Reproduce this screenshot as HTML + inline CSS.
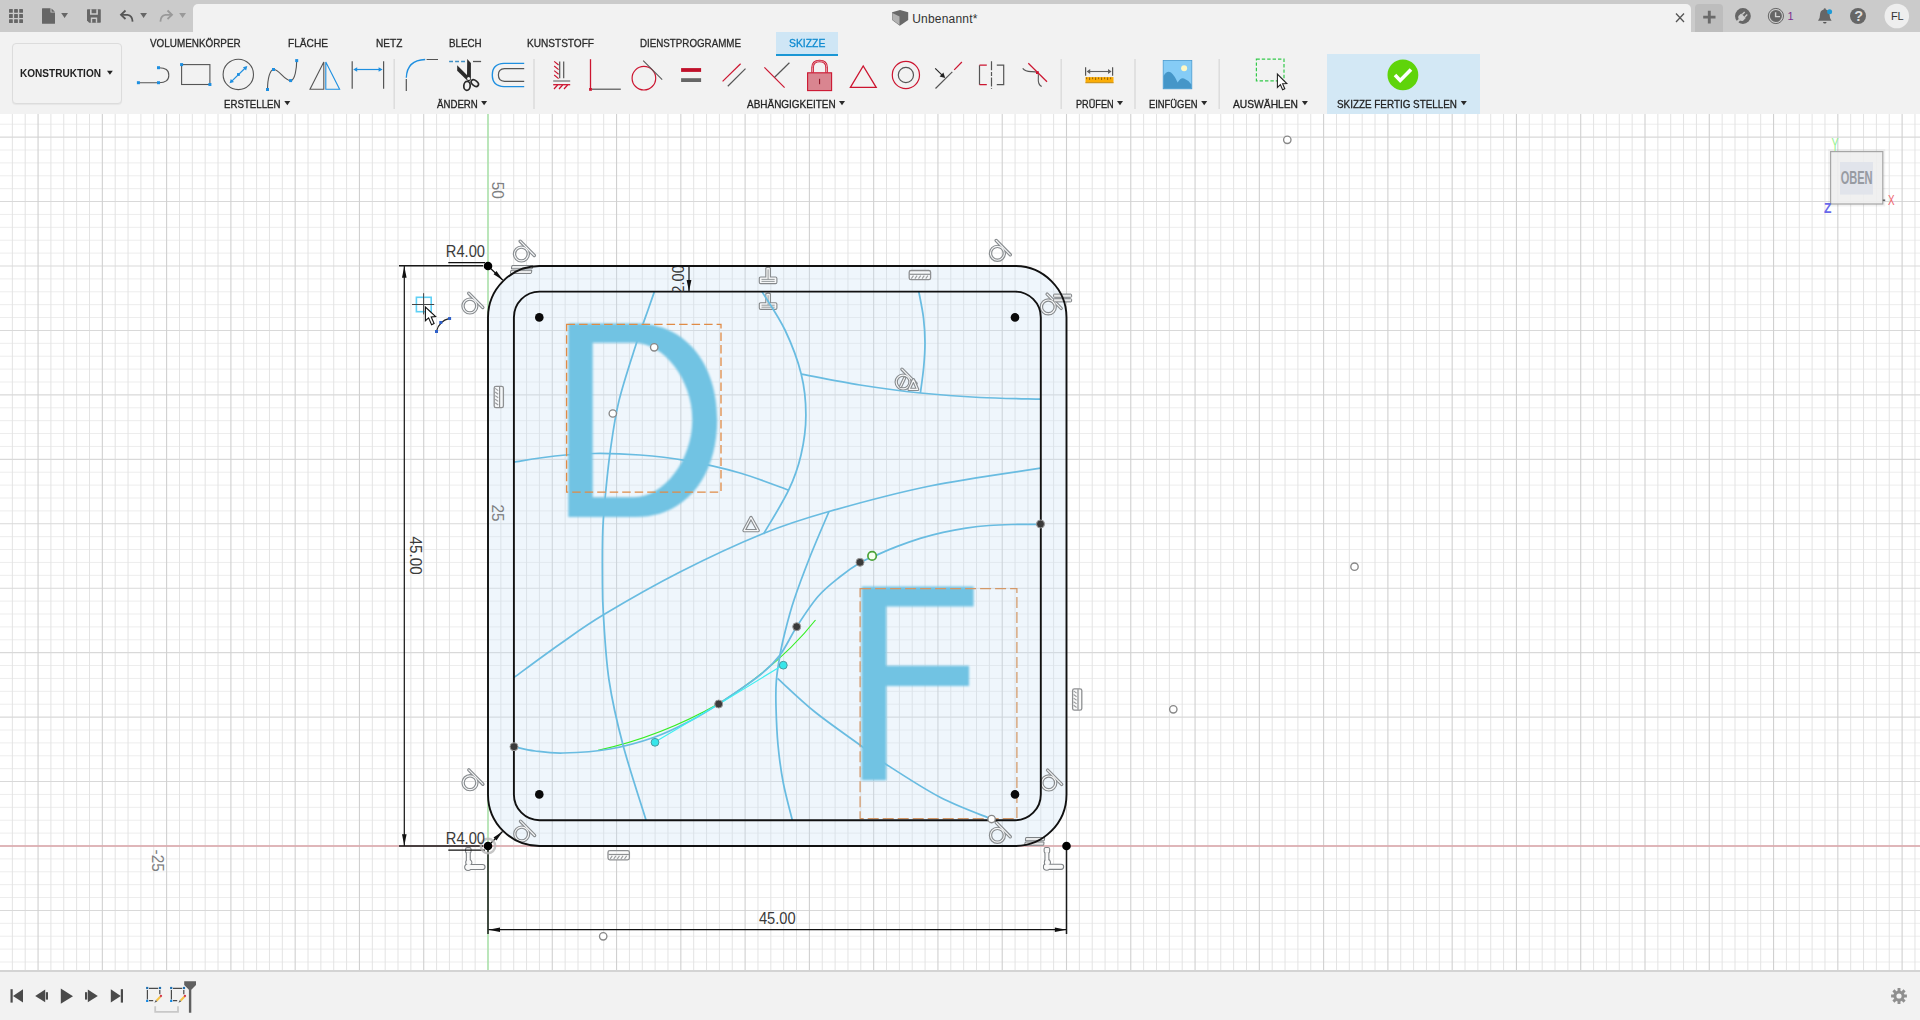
<!DOCTYPE html>
<html><head><meta charset="utf-8"><title>Fusion</title>
<style>
*{margin:0;padding:0;box-sizing:border-box}
html,body{width:1920px;height:1020px;overflow:hidden;background:#fff;font-family:"Liberation Sans",sans-serif;}
.t{position:absolute;white-space:nowrap;font-family:"Liberation Sans",sans-serif;}
#topbar{position:absolute;left:0;top:0;width:1920px;height:32px;background:#cbcbcb;}
#tab{position:absolute;left:193px;top:4px;width:1498px;height:28px;background:#f2f2f2;border-radius:5px 5px 0 0;}
#plus{position:absolute;left:1695px;top:4px;width:28px;height:28px;background:#bdbdbd;border-radius:4px 4px 0 0;}
#toolbar{position:absolute;left:0;top:32px;width:1920px;height:82px;background:#f2f2f2;}
#canvas{position:absolute;left:0;top:0;width:1920px;height:1020px;}
#bottom{position:absolute;left:0;top:970px;width:1920px;height:50px;background:#f2f2f2;border-top:2px solid #d4d4d4;}
svg{position:absolute;left:0;top:0;overflow:visible}

</style></head><body>
<div id="canvas"><svg width="1920" height="1020" viewBox="0 0 1920 1020">
<defs>
<filter id="blur1" x="-5%" y="-5%" width="110%" height="110%"><feGaussianBlur stdDeviation="1.3"/></filter>
<clipPath id="cvclip"><rect x="0" y="113.5" width="1920" height="856.5"/></clipPath>
<clipPath id="dimclip"><rect x="660" y="267" width="40" height="24.5"/></clipPath>
<g id="tan"><circle r="7"/><path d="M-1.2 -12.6 L12.9 1.5"/></g>
<g id="hor"><rect x="-10.7" y="-4.5" width="21.4" height="9" rx="1.5"/><path d="M-10.7 -0.4 H10.7"/></g>
<g id="perp"><path d="M-8 6 H8 M-8 3 H8 M0 3 V-7"/></g>
</defs>
<g clip-path="url(#cvclip)"><path d="M0 962.00H1920M0 949.11H1920M0 936.22H1920M0 923.33H1920M0 897.56H1920M0 884.67H1920M0 871.78H1920M0 858.89H1920M0 833.11H1920M0 820.22H1920M0 807.33H1920M0 794.44H1920M0 768.67H1920M0 755.78H1920M0 742.89H1920M0 730.00H1920M0 704.22H1920M0 691.33H1920M0 678.44H1920M0 665.56H1920M0 639.78H1920M0 626.89H1920M0 614.00H1920M0 601.11H1920M0 575.33H1920M0 562.44H1920M0 549.56H1920M0 536.67H1920M0 510.89H1920M0 498.00H1920M0 485.11H1920M0 472.22H1920M0 446.44H1920M0 433.56H1920M0 420.67H1920M0 407.78H1920M0 382.00H1920M0 369.11H1920M0 356.22H1920M0 343.33H1920M0 317.56H1920M0 304.67H1920M0 291.78H1920M0 278.89H1920M0 253.11H1920M0 240.22H1920M0 227.33H1920M0 214.44H1920M0 188.67H1920M0 175.78H1920M0 162.89H1920M0 150.00H1920M0 124.22H1920M0 111.33H1920" stroke="#ededed" stroke-width="1" fill="none"/><path d="M-0.51 113V970M12.34 113V970M25.20 113V970M50.91 113V970M63.77 113V970M76.62 113V970M89.48 113V970M115.19 113V970M128.04 113V970M140.90 113V970M153.76 113V970M179.47 113V970M192.32 113V970M205.18 113V970M218.03 113V970M243.74 113V970M256.60 113V970M269.46 113V970M282.31 113V970M308.02 113V970M320.88 113V970M333.73 113V970M346.59 113V970M372.30 113V970M385.16 113V970M398.01 113V970M410.87 113V970M436.58 113V970M449.43 113V970M462.29 113V970M475.14 113V970M500.86 113V970M513.71 113V970M526.57 113V970M539.42 113V970M565.13 113V970M577.99 113V970M590.84 113V970M603.70 113V970M629.41 113V970M642.27 113V970M655.12 113V970M667.98 113V970M693.69 113V970M706.54 113V970M719.40 113V970M732.26 113V970M757.97 113V970M770.82 113V970M783.68 113V970M796.53 113V970M822.24 113V970M835.10 113V970M847.96 113V970M860.81 113V970M886.52 113V970M899.38 113V970M912.23 113V970M925.09 113V970M950.80 113V970M963.66 113V970M976.51 113V970M989.37 113V970M1015.08 113V970M1027.93 113V970M1040.79 113V970M1053.64 113V970M1079.36 113V970M1092.21 113V970M1105.07 113V970M1117.92 113V970M1143.63 113V970M1156.49 113V970M1169.34 113V970M1182.20 113V970M1207.91 113V970M1220.77 113V970M1233.62 113V970M1246.48 113V970M1272.19 113V970M1285.04 113V970M1297.90 113V970M1310.76 113V970M1336.47 113V970M1349.32 113V970M1362.18 113V970M1375.03 113V970M1400.74 113V970M1413.60 113V970M1426.46 113V970M1439.31 113V970M1465.02 113V970M1477.88 113V970M1490.73 113V970M1503.59 113V970M1529.30 113V970M1542.16 113V970M1555.01 113V970M1567.87 113V970M1593.58 113V970M1606.43 113V970M1619.29 113V970M1632.14 113V970M1657.86 113V970M1670.71 113V970M1683.57 113V970M1696.42 113V970M1722.13 113V970M1734.99 113V970M1747.84 113V970M1760.70 113V970M1786.41 113V970M1799.27 113V970M1812.12 113V970M1824.98 113V970M1850.69 113V970M1863.54 113V970M1876.40 113V970M1889.26 113V970M1914.97 113V970" stroke="#e3e3e3" stroke-width="1" fill="none"/><path d="M0 910.44H1920M0 846.00H1920M0 781.56H1920M0 717.11H1920M0 652.67H1920M0 588.22H1920M0 523.78H1920M0 459.33H1920M0 394.89H1920M0 330.44H1920M0 266.00H1920M0 201.56H1920M0 137.11H1920" stroke="#d9d9d9" stroke-width="1.1" fill="none"/><path d="M38.06 113V970M102.33 113V970M166.61 113V970M230.89 113V970M295.17 113V970M359.44 113V970M423.72 113V970M488.00 113V970M552.28 113V970M616.56 113V970M680.83 113V970M745.11 113V970M809.39 113V970M873.67 113V970M937.94 113V970M1002.22 113V970M1066.50 113V970M1130.78 113V970M1195.06 113V970M1259.33 113V970M1323.61 113V970M1387.89 113V970M1452.17 113V970M1516.44 113V970M1580.72 113V970M1645.00 113V970M1709.28 113V970M1773.56 113V970M1837.83 113V970M1902.11 113V970" stroke="#d0d0d0" stroke-width="1.1" fill="none"/><path d="M0 846H1920" stroke="#dba4a8" stroke-width="1.4" fill="none"/><path d="M488 113V970" stroke="#98e898" stroke-width="1.1" fill="none"/><path d="M539.5 266 H1015 A51.5 51.5 0 0 1 1066.5 317.5 V794.4 A51.5 51.6 0 0 1 1015 846 H539.5 A51.5 51.6 0 0 1 488 794.4 V317.5 A51.5 51.5 0 0 1 539.5 266 Z" fill="rgba(202,225,246,0.3)" stroke="none"/><g transform="translate(521.4 254)" fill="none" stroke-linecap="round" stroke-linejoin="round"><g stroke="#888c8f" stroke-width="3.4"><circle r="6.9"/><path d="M-1.2 -12.8 L12.9 1.5"/></g><g stroke="#f6f7f8" stroke-width="1.15"><circle r="6.9"/><path d="M-1.2 -12.8 L12.9 1.5"/></g></g><g transform="translate(469.9 306)" fill="none" stroke-linecap="round" stroke-linejoin="round"><g stroke="#888c8f" stroke-width="3.4"><circle r="6.9"/><path d="M-1.2 -12.8 L12.9 1.5"/></g><g stroke="#f6f7f8" stroke-width="1.15"><circle r="6.9"/><path d="M-1.2 -12.8 L12.9 1.5"/></g></g><g transform="translate(997.4 253.3)" fill="none" stroke-linecap="round" stroke-linejoin="round"><g stroke="#888c8f" stroke-width="3.4"><circle r="6.9"/><path d="M-1.2 -12.8 L12.9 1.5"/></g><g stroke="#f6f7f8" stroke-width="1.15"><circle r="6.9"/><path d="M-1.2 -12.8 L12.9 1.5"/></g></g><g transform="translate(1048.3 306.9)" fill="none" stroke-linecap="round" stroke-linejoin="round"><g stroke="#888c8f" stroke-width="3.4"><circle r="6.9"/><path d="M-1.2 -12.8 L12.9 1.5"/></g><g stroke="#f6f7f8" stroke-width="1.15"><circle r="6.9"/><path d="M-1.2 -12.8 L12.9 1.5"/></g></g><g transform="translate(470 782.7)" fill="none" stroke-linecap="round" stroke-linejoin="round"><g stroke="#888c8f" stroke-width="3.4"><circle r="6.9"/><path d="M-1.2 -12.8 L12.9 1.5"/></g><g stroke="#f6f7f8" stroke-width="1.15"><circle r="6.9"/><path d="M-1.2 -12.8 L12.9 1.5"/></g></g><g transform="translate(521.7 834)" fill="none" stroke-linecap="round" stroke-linejoin="round"><g stroke="#888c8f" stroke-width="3.4"><circle r="6.9"/><path d="M-1.2 -12.8 L12.9 1.5"/></g><g stroke="#f6f7f8" stroke-width="1.15"><circle r="6.9"/><path d="M-1.2 -12.8 L12.9 1.5"/></g></g><g transform="translate(1048.8 782.9)" fill="none" stroke-linecap="round" stroke-linejoin="round"><g stroke="#888c8f" stroke-width="3.4"><circle r="6.9"/><path d="M-1.2 -12.8 L12.9 1.5"/></g><g stroke="#f6f7f8" stroke-width="1.15"><circle r="6.9"/><path d="M-1.2 -12.8 L12.9 1.5"/></g></g><g transform="translate(997.4 835.3)" fill="none" stroke-linecap="round" stroke-linejoin="round"><g stroke="#888c8f" stroke-width="3.4"><circle r="6.9"/><path d="M-1.2 -12.8 L12.9 1.5"/></g><g stroke="#f6f7f8" stroke-width="1.15"><circle r="6.9"/><path d="M-1.2 -12.8 L12.9 1.5"/></g></g><g transform="translate(903.1 382)" fill="none" stroke-linecap="round" stroke-linejoin="round"><g stroke="#888c8f" stroke-width="3.4"><circle r="6.9"/><path d="M-1.2 -12.8 L12.9 1.5"/></g><g stroke="#f6f7f8" stroke-width="1.15"><circle r="6.9"/><path d="M-1.2 -12.8 L12.9 1.5"/></g></g><g transform="" fill="none" stroke-linecap="round" stroke-linejoin="round"><g stroke="#888c8f" stroke-width="3.4"><path d="M909 389.4 H917.6 L913.4 379.8 Z M900.6 386.4 L904.6 378"/></g><g stroke="#f6f7f8" stroke-width="1.15"><path d="M909 389.4 H917.6 L913.4 379.8 Z M900.6 386.4 L904.6 378"/></g></g><g transform="translate(919.9 275.1) rotate(0)"><rect x="-10.7" y="-4.6" width="21.4" height="9.2" rx="1.8" fill="rgba(250,250,250,.7)" stroke="#8e9092" stroke-width="1.3"/><path d="M-10.2 -0.8H10.2" stroke="#8e9092" stroke-width="1.2"/><path d="M-8.6 3.6 l2.2 -3 M-5 3.6 l2.2 -3 M-1.4 3.6 l2.2 -3 M2.2 3.6 l2.2 -3 M5.8 3.6 l2.2 -3" stroke="#9a9c9e" stroke-width="1.1"/></g><g transform="translate(618.7 855.3) rotate(0)"><rect x="-10.7" y="-4.6" width="21.4" height="9.2" rx="1.8" fill="rgba(250,250,250,.7)" stroke="#8e9092" stroke-width="1.3"/><path d="M-10.2 -0.8H10.2" stroke="#8e9092" stroke-width="1.2"/><path d="M-8.6 3.6 l2.2 -3 M-5 3.6 l2.2 -3 M-1.4 3.6 l2.2 -3 M2.2 3.6 l2.2 -3 M5.8 3.6 l2.2 -3" stroke="#9a9c9e" stroke-width="1.1"/></g><g transform="translate(498.8 397) rotate(90)"><rect x="-10.7" y="-4.6" width="21.4" height="9.2" rx="1.8" fill="rgba(250,250,250,.7)" stroke="#8e9092" stroke-width="1.3"/><path d="M-10.2 -0.8H10.2" stroke="#8e9092" stroke-width="1.2"/><path d="M-8.6 3.6 l2.2 -3 M-5 3.6 l2.2 -3 M-1.4 3.6 l2.2 -3 M2.2 3.6 l2.2 -3 M5.8 3.6 l2.2 -3" stroke="#9a9c9e" stroke-width="1.1"/></g><g transform="translate(1077.2 699.5) rotate(90)"><rect x="-10.7" y="-4.6" width="21.4" height="9.2" rx="1.8" fill="rgba(250,250,250,.7)" stroke="#8e9092" stroke-width="1.3"/><path d="M-10.2 -0.8H10.2" stroke="#8e9092" stroke-width="1.2"/><path d="M-8.6 3.6 l2.2 -3 M-5 3.6 l2.2 -3 M-1.4 3.6 l2.2 -3 M2.2 3.6 l2.2 -3 M5.8 3.6 l2.2 -3" stroke="#9a9c9e" stroke-width="1.1"/></g><g transform="translate(768.1 275.6)"><path d="M-2.3 -7.6 Q0 -9 2.3 -7.6 V1.4 H7.4 Q8.8 1.4 8.8 2.8 V6.6 Q8.8 8 7.4 8 H-7.4 Q-8.8 8 -8.8 6.6 V2.8 Q-8.8 1.4 -7.4 1.4 H-2.3 Z" fill="#f6f7f8" stroke="#84888b" stroke-width="1.1"/><path d="M0 -6.2 V3.6 M-6.6 3.8 H6.6 M-6.6 5.8 H6.6" stroke="#8a8e91" stroke-width=".9" fill="none"/></g><g transform="translate(768.1 301.4)"><path d="M-2.3 -7.6 Q0 -9 2.3 -7.6 V1.4 H7.4 Q8.8 1.4 8.8 2.8 V6.6 Q8.8 8 7.4 8 H-7.4 Q-8.8 8 -8.8 6.6 V2.8 Q-8.8 1.4 -7.4 1.4 H-2.3 Z" fill="#f6f7f8" stroke="#84888b" stroke-width="1.1"/><path d="M0 -6.2 V3.6 M-6.6 3.8 H6.6 M-6.6 5.8 H6.6" stroke="#8a8e91" stroke-width=".9" fill="none"/></g><g transform="translate(468.3 867)"><g fill="#fafafa" stroke="#7f8386" stroke-width="2.2"><rect x="-2.2" y="-18.8" width="4.4" height="4.4" rx="1"/><rect x="-1.4" y="-14.6" width="2.8" height="9.6"/><circle cx="0.5" cy="-4.4" r="2.5"/><rect x="-2.8" y="-2" width="19" height="4" rx="2"/><circle cx="-0.2" cy="0.2" r="2.7"/></g><g fill="#fafafa" stroke="none"><rect x="-2.2" y="-18.8" width="4.4" height="4.4" rx="1"/><rect x="-1.4" y="-14.6" width="2.8" height="9.6"/><circle cx="0.5" cy="-4.4" r="2.5"/><rect x="-2.8" y="-2" width="19" height="4" rx="2"/><circle cx="-0.2" cy="0.2" r="2.7"/></g></g><g transform="translate(1046.9 866.8)"><g fill="#fafafa" stroke="#7f8386" stroke-width="2.2"><rect x="-2.2" y="-18.8" width="4.4" height="4.4" rx="1"/><rect x="-1.4" y="-14.6" width="2.8" height="9.6"/><circle cx="0.5" cy="-4.4" r="2.5"/><rect x="-2.8" y="-2" width="19" height="4" rx="2"/><circle cx="-0.2" cy="0.2" r="2.7"/></g><g fill="#fafafa" stroke="none"><rect x="-2.2" y="-18.8" width="4.4" height="4.4" rx="1"/><rect x="-1.4" y="-14.6" width="2.8" height="9.6"/><circle cx="0.5" cy="-4.4" r="2.5"/><rect x="-2.8" y="-2" width="19" height="4" rx="2"/><circle cx="-0.2" cy="0.2" r="2.7"/></g></g><g transform="" fill="none" stroke-linecap="round" stroke-linejoin="round"><g stroke="#888c8f" stroke-width="3.4"><path d="M744 530.6 H758.2 L751 517.6 Z"/></g><g stroke="#f6f7f8" stroke-width="1.15"><path d="M744 530.6 H758.2 L751 517.6 Z"/></g></g><g transform="translate(521.6 269.5) skewX(-12)"><rect x="-10.5" y="-3.9" width="21" height="3.2" rx=".8" fill="#e9eaeb" stroke="#7d8184" stroke-width="1"/><rect x="-10.5" y="0.7" width="21" height="3.2" rx=".8" fill="#e9eaeb" stroke="#7d8184" stroke-width="1"/></g><g transform="translate(1062.6 298) skewX(0)"><rect x="-9.0" y="-3.9" width="18" height="3.2" rx=".8" fill="#e9eaeb" stroke="#7d8184" stroke-width="1"/><rect x="-9.0" y="0.7" width="18" height="3.2" rx=".8" fill="#e9eaeb" stroke="#7d8184" stroke-width="1"/></g><g transform="translate(1034.7 841.4) skewX(-8)"><rect x="-9.5" y="-3.9" width="19" height="3.2" rx=".8" fill="#e9eaeb" stroke="#7d8184" stroke-width="1"/><rect x="-9.5" y="0.7" width="19" height="3.2" rx=".8" fill="#e9eaeb" stroke="#7d8184" stroke-width="1"/></g><path d="M598 750.3 Q660 737 719 703.5 Q780 665 815.5 620" stroke="#35ee22" stroke-width="1.2" fill="none"/><path d="M654.4 291.6 C653.3 294.7 651.1 301.2 648.0 310.0 C644.9 318.8 640.8 329.4 636.0 344.5 C631.2 359.6 623.3 383.0 619.0 400.6 C614.7 418.2 612.6 434.6 610.4 450.0 C608.2 465.4 606.9 479.7 605.6 493.0 C604.3 506.3 603.3 516.3 602.8 530.0 C602.3 543.7 602.3 561.2 602.4 575.0 C602.5 588.8 602.2 595.5 603.3 613.0 C604.4 630.5 605.7 658.0 609.0 680.0 C612.3 702.0 616.8 721.7 623.0 745.0 C629.2 768.3 642.2 807.5 646.0 820.0" stroke="#69bce1" stroke-width="1.75" fill="none"/><path d="M514.0 462.0 C520.8 461.0 541.7 457.4 555.0 456.0 C568.3 454.6 579.8 453.7 594.0 453.5 C608.2 453.3 624.8 453.9 640.0 455.0 C655.2 456.1 668.3 457.4 685.0 460.4 C701.7 463.4 722.7 468.0 740.0 473.0 C757.3 478.0 780.5 487.3 788.6 490.2" stroke="#69bce1" stroke-width="1.75" fill="none"/><path d="M762.0 291.6 C765.8 298.0 778.5 316.3 785.0 330.0 C791.5 343.7 797.7 359.8 801.2 374.0 C804.7 388.2 805.9 401.5 805.9 415.0 C805.9 428.5 803.9 442.5 801.0 455.0 C798.1 467.5 794.9 477.0 788.6 490.2 C782.4 503.4 767.7 526.7 763.5 534.0" stroke="#69bce1" stroke-width="1.75" fill="none"/><path d="M514.0 677.5 C521.7 671.9 545.0 654.5 560.0 644.0 C575.0 633.5 584.3 626.3 604.3 614.3 C624.3 602.3 653.5 585.5 680.0 572.0 C706.5 558.5 738.5 543.6 763.3 533.5 C788.1 523.4 801.2 519.4 829.0 511.5 C856.8 503.6 894.8 493.2 930.0 486.0 C965.2 478.8 1022.1 471.2 1040.5 468.2" stroke="#69bce1" stroke-width="1.75" fill="none"/><path d="M829.0 511.5 C825.8 519.2 815.3 543.2 809.5 558.0 C803.7 572.8 798.1 587.7 794.0 600.0 C789.9 612.3 787.3 622.8 785.0 632.0 C782.7 641.2 781.4 647.0 780.0 655.0 C778.6 663.0 777.1 671.3 776.4 680.0 C775.7 688.7 775.7 696.2 776.0 707.0 C776.3 717.8 776.8 732.3 778.0 745.0 C779.2 757.7 780.9 770.5 783.3 783.0 C785.7 795.5 790.8 813.8 792.3 820.0" stroke="#69bce1" stroke-width="1.75" fill="none"/><path d="M1040.5 524.3 C1035.7 524.3 1020.5 524.3 1011.9 524.5 C1003.3 524.7 996.6 524.9 989.0 525.5 C981.4 526.1 973.6 527.0 966.0 528.1 C958.4 529.2 950.7 530.6 943.1 532.3 C935.5 534.0 927.8 536.0 920.2 538.4 C912.6 540.8 904.4 543.7 897.3 546.4 C890.2 549.1 883.9 551.9 877.8 554.6 C871.6 557.3 866.7 558.8 860.4 562.5 C854.1 566.2 847.1 571.1 840.0 576.8 C832.9 582.5 825.2 588.2 818.0 596.5 C810.8 604.8 803.0 617.0 796.7 626.7 C790.4 636.5 786.1 647.0 780.0 655.0 C773.9 663.0 770.2 666.8 760.0 675.0 C749.8 683.2 730.2 696.3 718.5 704.0 C706.8 711.7 700.6 715.5 690.0 721.0 C679.4 726.5 668.3 732.3 655.0 737.0 C641.7 741.7 625.3 746.3 610.0 749.0 C594.7 751.7 575.5 752.7 563.0 753.0 C550.5 753.3 543.2 752.0 535.0 751.0 C526.8 750.0 517.5 747.4 514.0 746.7" stroke="#69bce1" stroke-width="1.75" fill="none"/><path d="M777.5 678.3 C783.8 683.9 801.2 700.9 815.0 712.0 C828.8 723.1 848.1 736.3 860.0 745.0 C871.9 753.7 872.9 755.6 886.3 764.4 C899.7 773.1 923.0 788.4 940.5 797.5 C958.0 806.6 983.0 815.4 991.5 819.0" stroke="#69bce1" stroke-width="1.75" fill="none"/><path d="M801.2 374.1 C811.0 375.9 840.1 381.9 860.0 385.0 C879.9 388.1 900.4 390.9 920.4 393.0 C940.4 395.1 960.0 396.5 980.0 397.5 C1000.0 398.5 1030.4 398.9 1040.5 399.2" stroke="#69bce1" stroke-width="1.75" fill="none"/><path d="M918.8 291.6 C919.6 296.0 922.5 309.5 923.5 318.0 C924.5 326.5 925.0 334.4 925.0 342.7 C925.0 351.0 924.4 359.6 923.6 368.0 C922.8 376.4 920.9 388.8 920.4 393.0" stroke="#69bce1" stroke-width="1.75" fill="none"/><path d="M655 742 L719 704 L783 665" stroke="#3ef0f0" stroke-width="1.2" fill="none"/><path d="M568.3 323.4 H636 C686 323.4 717.2 364 717.2 419.5 C717.2 476.4 686 517 636 517 H568.3 Z M592.7 342.8 V497.2 H634 C664 497.2 692.3 460 692.3 419.5 C692.3 380 664 342.8 634 342.8 Z" fill="#71c3e3" fill-rule="evenodd" filter="url(#blur1)"/><path d="M861.7 586.5 H973.6 V606.5 H886.3 V665.8 H969.1 V685.9 H886.3 V780.3 H861.7 Z" fill="#71c3e3" filter="url(#blur1)"/><rect x="566.6" y="324.4" width="154.4" height="167.8" fill="none" stroke="#e08b45" stroke-width="1.3" stroke-dasharray="8.5 4"/><rect x="860.1" y="588.7" width="156.8" height="230" fill="none" stroke="#d39868" stroke-width="1.25" stroke-dasharray="11 4"/><path d="M539.5 266 H1015 A51.5 51.5 0 0 1 1066.5 317.5 V794.4 A51.5 51.6 0 0 1 1015 846 H539.5 A51.5 51.6 0 0 1 488 794.4 V317.5 A51.5 51.5 0 0 1 539.5 266 Z" fill="none" stroke="#111" stroke-width="1.9"/><path d="M539.5 291.6 H1015 A25.8 25.8 0 0 1 1040.8 317.5 V794.4 A25.8 25.8 0 0 1 1015 820.2 H539.5 A25.6 25.8 0 0 1 513.9 794.4 V317.5 A25.6 25.9 0 0 1 539.5 291.6 Z" fill="none" stroke="#111" stroke-width="1.9"/><path d="M404.3 266V846 M488.5 929.7H1066 M448.3 262.6H485 M448.3 850.2H485 M488 266L502.7 280 M488 846L502.5 831.5 M689 266V291" stroke="#111" stroke-width="1.2" fill="none"/><path d="M399 265.8H483 M399 846H483 M488 846V934 M1066.5 846V934" stroke="#1a1a1a" stroke-width="1.5" fill="none"/><path d="M0 0 L-11.5 -2.3 L-11.5 2.3 Z" fill="#111" transform="translate(404.3 266.3) rotate(-90)"/><path d="M0 0 L-11.5 -2.3 L-11.5 2.3 Z" fill="#111" transform="translate(404.3 845.7) rotate(90)"/><path d="M0 0 L-11.5 -2.3 L-11.5 2.3 Z" fill="#111" transform="translate(488.5 929.7) rotate(180)"/><path d="M0 0 L-11.5 -2.3 L-11.5 2.3 Z" fill="#111" transform="translate(1066.3 929.7) rotate(0)"/><path d="M0 0 L-11 -2.1 L-11 2.1 Z" fill="#111" transform="translate(503 280.2) rotate(43.6)"/><path d="M0 0 L-11 -2.1 L-11 2.1 Z" fill="#111" transform="translate(502.8 831.2) rotate(-45)"/><path d="M0 0 L-11.4 -2.4 L-11.4 2.4 Z" fill="#111" transform="translate(689 291.3) rotate(90)"/><circle cx="539.3" cy="317.4" r="4.3" fill="#0a0a0a"/><circle cx="1015" cy="317.4" r="4.3" fill="#0a0a0a"/><circle cx="539.3" cy="794.4" r="4.3" fill="#0a0a0a"/><circle cx="1015" cy="794.4" r="4.3" fill="#0a0a0a"/><circle cx="488" cy="846" r="7.2" fill="none" stroke="#b8b8b8" stroke-width="2.4" opacity=".8"/><circle cx="488" cy="266" r="4.3" fill="#000"/><circle cx="488" cy="846" r="4.3" fill="#000"/><circle cx="1066.5" cy="846" r="4.3" fill="#000"/><circle cx="1040.5" cy="524" r="4" fill="#3a3a3a" stroke="#9a9a9a" stroke-width="1"/><circle cx="860" cy="562.3" r="4" fill="#3a3a3a" stroke="#9a9a9a" stroke-width="1"/><circle cx="796.7" cy="626.7" r="4" fill="#3a3a3a" stroke="#9a9a9a" stroke-width="1"/><circle cx="718.7" cy="704" r="4" fill="#3a3a3a" stroke="#9a9a9a" stroke-width="1"/><circle cx="514" cy="746.7" r="4" fill="#3a3a3a" stroke="#9a9a9a" stroke-width="1"/><circle cx="654.2" cy="347.3" r="3.7" fill="#fff" stroke="#888" stroke-width="1.35"/><circle cx="612.8" cy="413.5" r="3.7" fill="#fff" stroke="#888" stroke-width="1.35"/><circle cx="1287.3" cy="139.8" r="3.7" fill="#fff" stroke="#888" stroke-width="1.35"/><circle cx="1354.5" cy="566.7" r="3.7" fill="#fff" stroke="#888" stroke-width="1.35"/><circle cx="1173.3" cy="709.3" r="3.7" fill="#fff" stroke="#888" stroke-width="1.35"/><circle cx="603.2" cy="936.3" r="3.7" fill="#fff" stroke="#888" stroke-width="1.35"/><circle cx="991.6" cy="819" r="3.7" fill="#fff" stroke="#888" stroke-width="1.35"/><circle cx="872.1" cy="555.9" r="4.2" fill="#f4fff0" stroke="#4aa238" stroke-width="1.7"/><circle cx="655" cy="742.3" r="3.9" fill="#36e6ea" stroke="#4a9aa0" stroke-width="1"/><circle cx="783.3" cy="665.2" r="3.9" fill="#36e6ea" stroke="#4a9aa0" stroke-width="1"/><rect x="416.4" y="297.3" width="14.8" height="14.4" fill="none" stroke="#5fd0f5" stroke-width="1.6"/><path d="M412 304.5H434.2 M423.6 293.2V314.4" stroke="#444" stroke-width="1" fill="none"/><path d="M425.4 307 V320.7 L428.6 317.8 L431.6 324.7 L434.1 323.5 L431.2 316.9 L435.6 316.6 Z" fill="#fff" stroke="#111" stroke-width="1.1"/><path d="M436.4 331.4 Q439 321 449.5 318.4" stroke="#222" stroke-width="1.1" fill="none"/><rect x="435.0" y="330.0" width="3" height="3" fill="#2f60c8"/><rect x="439.3" y="321.0" width="3" height="3" fill="#2f60c8"/><rect x="448.1" y="317.0" width="3" height="3" fill="#2f60c8"/><g font-family="Liberation Sans, sans-serif"><text transform="translate(465.4 251.5) rotate(0) scale(1 1.12)" x="0" y="5.26" font-size="14.7" fill="#3a3a3a" text-anchor="middle">R4.00</text><text transform="translate(465.4 838.3) rotate(0) scale(1 1.12)" x="0" y="5.26" font-size="14.7" fill="#3a3a3a" text-anchor="middle">R4.00</text><text transform="translate(777.3 918.4) rotate(0) scale(1 1.12)" x="0" y="5.26" font-size="14.7" fill="#3a3a3a" text-anchor="middle">45.00</text><text transform="translate(415.6 555.6) rotate(90) scale(1 1.12)" x="0" y="5.44" font-size="15.2" fill="#3a3a3a" text-anchor="middle">45.00</text><g clip-path="url(#dimclip)"><text transform="translate(678.4 279.5) rotate(-90) scale(1 1.12)" x="0" y="5.26" font-size="14.7" fill="#3a3a3a" text-anchor="middle">2.00</text></g><text transform="translate(498 190.3) rotate(90) scale(1 1.12)" x="0" y="5.48" font-size="15.3" fill="#7e8082" text-anchor="middle">50</text><text transform="translate(498 512.9) rotate(90) scale(1 1.12)" x="0" y="5.48" font-size="15.3" fill="#7e8082" text-anchor="middle">25</text><text transform="translate(158 860.6) rotate(90) scale(1 1.12)" x="0" y="5.48" font-size="15.3" fill="#7e8082" text-anchor="middle">-25</text></g></g>
<rect x="1829.6" y="150.6" width="54.2" height="54.4" fill="none" stroke="rgba(0,0,0,.05)" stroke-width="3"/>
<rect x="1830.6" y="151.6" width="52.2" height="52.4" fill="rgba(238,238,238,.88)" stroke="#a6a6a6" stroke-width="1.2"/>
<rect x="1840" y="162" width="33" height="32.6" fill="rgba(222,226,234,.85)"/>
<g font-family="Liberation Sans, sans-serif">
<text transform="translate(1856.6 184) scale(.62 1)" font-size="17.8" fill="#979ba2" text-anchor="middle" font-weight="bold">OBEN</text>
<text transform="translate(1835 150.8) scale(.6 1)" font-size="17.8" fill="#93f193" text-anchor="middle">Y</text>
<text transform="translate(1891.4 205) scale(.66 1)" font-size="15" fill="#ee6670" text-anchor="middle">X</text>
<text transform="translate(1827.8 212.7) scale(.8 1)" font-size="15.2" fill="#6868ea" text-anchor="middle" font-weight="bold">Z</text>
</g>
<path d="M1882.8 200.2 h2.4" stroke="#555" stroke-width="1.4"/>
</svg></div>
<div id="topbar"><div id="tab"></div><div id="plus"></div>
<svg width="1920" height="32" viewBox="0 0 1920 32">
<!-- grid icon -->
<g fill="#666">
<rect x="9" y="9" width="3.8" height="3.8" rx=".5"/><rect x="14.1" y="9" width="3.8" height="3.8" rx=".5"/><rect x="19.2" y="9" width="3.8" height="3.8" rx=".5"/>
<rect x="9" y="14.1" width="3.8" height="3.8" rx=".5"/><rect x="14.1" y="14.1" width="3.8" height="3.8" rx=".5"/><rect x="19.2" y="14.1" width="3.8" height="3.8" rx=".5"/>
<rect x="9" y="19.2" width="3.8" height="3.8" rx=".5"/><rect x="14.1" y="19.2" width="3.8" height="3.8" rx=".5"/><rect x="19.2" y="19.2" width="3.8" height="3.8" rx=".5"/>
</g>
<!-- file -->
<path d="M42.5 8.2 H50.5 V12.6 H55 V23.2 Q55 23.8 54.4 23.8 H42.6 Q42 23.8 42 23.2 V8.8 Q42 8.2 42.5 8.2 Z M51.5 8.4 L54.9 11.7 H51.5 Z" fill="#666"/>
<path d="M61.2 13 H68 L64.6 18 Z" fill="#666"/>
<!-- save -->
<path d="M87 9.8 Q87 9.2 87.6 9.2 H100.2 Q100.8 9.2 100.8 9.8 V22.1 Q100.8 22.7 100.2 22.7 H89.2 L87 20.6 Z" fill="#666"/>
<path d="M90 9.2 H91.6 V13.3 H96.3 V9.2 H97.9 V14.8 H90 Z" fill="#cbcbcb"/>
<path d="M90.8 22.7 V17.6 H97.2 V22.7 H95.8 V19 H92.2 V22.7 Z" fill="#cbcbcb"/>
<!-- undo -->
<path d="M125.5 10.5 L121 14.8 L125.5 19" fill="none" stroke="#555" stroke-width="1.8" stroke-linejoin="miter"/>
<path d="M121.5 14.8 H127.5 Q132.3 15.2 132.6 21.6" fill="none" stroke="#555" stroke-width="1.8"/>
<path d="M140.2 13 H147 L143.6 18 Z" fill="#666"/>
<!-- redo -->
<path d="M167.5 10.5 L172 14.8 L167.5 19" fill="none" stroke="#999" stroke-width="1.8" stroke-linejoin="miter"/>
<path d="M171.5 14.8 H165.5 Q160.7 15.2 160.4 21.6" fill="none" stroke="#999" stroke-width="1.8"/>
<path d="M179.2 13 H186 L182.6 18 Z" fill="#999"/>
<!-- title cube -->
<path d="M892.1 12.3 L900 10 L908.2 12.3 L908.2 20 L899.8 25.7 L892.1 20 Z" fill="#696969"/>
<path d="M892.4 12.9 L899.5 16.5 L899.5 25 L892.4 19.8 Z" fill="#b2b2b2"/>
<!-- close x -->
<path d="M1676 13.5 L1684 22 M1684 13.5 L1676 22" stroke="#555" stroke-width="1.3" fill="none"/>
<!-- plus -->
<path d="M1709.3 10.8 V23.4 M1703.2 17.1 H1715.5" stroke="#6a6a6a" stroke-width="2.9" fill="none"/>
<!-- extensions (plug in disc) -->
<circle cx="1742.9" cy="16" r="7.9" fill="#666"/>
<g transform="translate(1742.6 16.6) rotate(-45)" fill="#cbcbcb">
<path d="M-2.6 -3.3 H1.2 V3.3 H-2.6 Q-4.6 2.6 -4.6 0 Q-4.6 -2.6 -2.6 -3.3 Z"/>
<rect x="1.2" y="-2.5" width="3.6" height="1.4"/><rect x="1.2" y="1.1" width="3.6" height="1.4"/>
<rect x="-9.5" y="-1" width="5.4" height="2"/>
</g>
<!-- clock -->
<circle cx="1775.9" cy="16" r="7.6" fill="none" stroke="#666" stroke-width="1"/>
<circle cx="1775.9" cy="16" r="6" fill="#666"/>
<path d="M1775.6 12.2 V16.6 H1780" stroke="#d4d4d4" stroke-width="1.4" fill="none"/>
<!-- bell -->
<path d="M1824.8 8.2 Q1825.9 8.2 1825.9 9.4 Q1829.6 10.4 1829.6 14.8 Q1829.6 19 1831.6 20.8 H1818 Q1820 19 1820 14.8 Q1820 10.4 1823.7 9.4 Q1823.7 8.2 1824.8 8.2 Z" fill="#666"/>
<path d="M1823 22 H1826.6 Q1826.4 23.6 1824.8 23.6 Q1823.2 23.6 1823 22 Z" fill="#555"/>
<circle cx="1829.6" cy="11.8" r="2.5" fill="#1e9ad6"/>
<!-- help -->
<circle cx="1858" cy="16" r="8" fill="#666"/>
<!-- avatar -->
<circle cx="1896.8" cy="16" r="12.3" fill="#eeeeee"/>
</svg>
<span class="t" style="left:1854.3px;top:7.6px;font-size:14.5px;line-height:17px;color:#dedede;font-weight:bold;">?</span>
<span class="t" style="left:912.2px;top:11.6px;font-size:12px;line-height:15px;color:#333;letter-spacing:0.2px" id="title">Unbenannt*</span>
<span class="t" style="left:1787.4px;top:10.2px;font-size:11px;line-height:13px;color:#7b2f8f;">1</span>
<span class="t" style="left:1891px;top:9.6px;font-size:11px;line-height:13px;color:#333;letter-spacing:-.2px">FL</span>
</div>
<div id="toolbar"><div style="position:absolute;left:12px;top:11px;width:109.5px;height:60.5px;border:1.5px solid #dcdcdc;border-radius:4px;background:#f2f2f2;box-shadow:0 1px 1px rgba(0,0,0,.05)"></div>
<span class="t" style="left:20.20px;top:34.82px;font-size:10.5px;line-height:13px;color:#222;transform:scaleX(0.9577);transform-origin:0 50%;font-weight:bold;">KONSTRUKTION</span>
<div style="position:absolute;left:776px;top:0px;width:61.7px;height:22.5px;background:#cfe6f5;"></div>
<div style="position:absolute;left:776px;top:21.5px;width:61.7px;height:2.5px;background:#1a97d5;"></div>
<div style="position:absolute;left:1327px;top:22px;width:153px;height:60px;background:#d3e8f5;"></div>
<span class="t" style="left:150.30px;top:4.93px;font-size:11px;line-height:13px;color:#2a2a2a;transform:scaleX(0.8993);transform-origin:0 50%;-webkit-text-stroke:.3px #2a2a2a;">VOLUMENKÖRPER</span>
<span class="t" style="left:288.00px;top:4.93px;font-size:11px;line-height:13px;color:#2a2a2a;transform:scaleX(0.9217);transform-origin:0 50%;-webkit-text-stroke:.3px #2a2a2a;">FLÄCHE</span>
<span class="t" style="left:376.00px;top:4.93px;font-size:11px;line-height:13px;color:#2a2a2a;transform:scaleX(0.9158);transform-origin:0 50%;-webkit-text-stroke:.3px #2a2a2a;">NETZ</span>
<span class="t" style="left:449.30px;top:4.93px;font-size:11px;line-height:13px;color:#2a2a2a;transform:scaleX(0.8915);transform-origin:0 50%;-webkit-text-stroke:.3px #2a2a2a;">BLECH</span>
<span class="t" style="left:527.00px;top:4.93px;font-size:11px;line-height:13px;color:#2a2a2a;transform:scaleX(0.9161);transform-origin:0 50%;-webkit-text-stroke:.3px #2a2a2a;">KUNSTSTOFF</span>
<span class="t" style="left:640.00px;top:4.93px;font-size:11px;line-height:13px;color:#2a2a2a;transform:scaleX(0.8885);transform-origin:0 50%;-webkit-text-stroke:.3px #2a2a2a;">DIENSTPROGRAMME</span>
<span class="t" style="left:789.00px;top:4.93px;font-size:11px;line-height:13px;color:#0e8ad0;transform:scaleX(0.9427);transform-origin:0 50%;-webkit-text-stroke:.3px #0e8ad0;">SKIZZE</span>
<span class="t" style="left:224.00px;top:65.93px;font-size:11px;line-height:13px;color:#222;transform:scaleX(0.8802);transform-origin:0 50%;-webkit-text-stroke:.3px #222;">ERSTELLEN</span>
<span class="t" style="left:436.50px;top:65.93px;font-size:11px;line-height:13px;color:#222;transform:scaleX(0.8784);transform-origin:0 50%;-webkit-text-stroke:.3px #222;">ÄNDERN</span>
<span class="t" style="left:747.20px;top:65.93px;font-size:11px;line-height:13px;color:#222;transform:scaleX(0.9060);transform-origin:0 50%;-webkit-text-stroke:.3px #222;">ABHÄNGIGKEITEN</span>
<span class="t" style="left:1075.80px;top:65.93px;font-size:11px;line-height:13px;color:#222;transform:scaleX(0.8314);transform-origin:0 50%;-webkit-text-stroke:.3px #222;">PRÜFEN</span>
<span class="t" style="left:1149.40px;top:65.93px;font-size:11px;line-height:13px;color:#222;transform:scaleX(0.8516);transform-origin:0 50%;-webkit-text-stroke:.3px #222;">EINFÜGEN</span>
<span class="t" style="left:1233.40px;top:65.93px;font-size:11px;line-height:13px;color:#222;transform:scaleX(0.9328);transform-origin:0 50%;-webkit-text-stroke:.3px #222;">AUSWÄHLEN</span>
<span class="t" style="left:1337.40px;top:65.93px;font-size:11px;line-height:13px;color:#222;transform:scaleX(0.8978);transform-origin:0 50%;-webkit-text-stroke:.3px #222;">SKIZZE FERTIG STELLEN</span>
<svg width="1920" height="82" viewBox="0 32 1920 82">
<g fill="none" stroke-width="1.1" stroke-linecap="butt">
<!-- separators -->
<g stroke="#dcdcdc" stroke-width="1.5">
<path d="M394.2 59 V109 M534 59 V109 M1061.2 59 V109 M1135 59 V109 M1219.2 59 V109"/>
</g>
<!-- 1 line/arc -->
<path d="M138.4 82.7 H158.5 M158.5 67.7 Q169 67.5 168.8 75.2 Q169 82.9 158.5 82.7" stroke="#555"/>
<g fill="#1e8fe0" stroke="none"><rect x="136.9" y="81.2" width="3" height="3"/><rect x="157" y="81.2" width="3" height="3"/><rect x="157" y="66.2" width="3" height="3"/></g>
<!-- 2 rect -->
<rect x="181.6" y="64.6" width="28.3" height="19.9" stroke="#555"/>
<g fill="#1e8fe0" stroke="none"><rect x="180.1" y="63.1" width="3" height="3"/><rect x="208.4" y="83" width="3" height="3"/></g>
<!-- 3 circle -->
<circle cx="238.3" cy="74.4" r="15.2" stroke="#555"/>
<path d="M231 81.9 L246 67.2" stroke="#1e8fe0" stroke-width="1.2"/>
<path d="M229.6 83.3 l1.2 -4.4 l3.2 3.2 Z M247.3 66 l-1.2 4.4 l-3.2 -3.2 Z" fill="#1e8fe0" stroke="none"/>
<rect x="237" y="73.1" width="2.8" height="2.8" fill="#1e8fe0" stroke="none"/>
<!-- 4 spline -->
<path d="M267.5 89.5 C267.6 78 270 70 273.5 69.5 C279 69 284 80.5 290.6 80.6 C295 80.5 296.7 68 296.7 60.6" stroke="#555"/>
<g fill="#1e8fe0" stroke="none"><rect x="266" y="88" width="3" height="3"/><rect x="272" y="68" width="3" height="3"/><rect x="289.1" y="79.1" width="3" height="3"/><rect x="295.2" y="59.1" width="3" height="3"/></g>
<!-- 5 mirror -->
<path d="M310 89.2 H323.8 V62 Z" stroke="#555"/>
<path d="M339.6 89.2 H325.8 V62 Z" stroke="#1e8fe0"/>
<!-- 6 dimension -->
<path d="M352.2 61.3 V88.8 M383.6 61.3 V88.8" stroke="#555" stroke-width="1.2"/>
<path d="M355 69.5 H381" stroke="#1e8fe0" stroke-width="1.2"/>
<path d="M353.2 69.5 l4 -2.2 v4.4 Z M382.6 69.5 l-4 -2.2 v4.4 Z" fill="#1e8fe0" stroke="none"/>
<!-- 7 fillet -->
<path d="M406.3 91 V79 M426.6 59.5 H438" stroke="#555" stroke-width="1.2"/>
<path d="M406.3 77.8 Q407 60 425.2 59.5" stroke="#1e8fe0" stroke-width="1.3"/>
<!-- 8 trim -->
<path d="M449.1 61.5 H465.4" stroke="#3f8fc4" stroke-dasharray="3.9 2.1" stroke-width="1.3"/>
<path d="M473 61.5 H481.1" stroke="#555" stroke-width="1.3"/>
<path d="M467.2 59.1 L470.9 63 L470.9 79.5 L468.6 82 L466.4 79.3 L467 75.4 Z" fill="#2b2b2b" stroke="none"/>
<path d="M457.2 65.2 L467.2 75.2 L470.6 80.6 L466.2 79.6 L457.2 70.7 Z" fill="#2b2b2b" stroke="none"/>
<circle cx="468.6" cy="78.6" r="1.5" fill="#f2f2f2" stroke="none"/>
<ellipse cx="467" cy="85.8" rx="3.2" ry="4.5" stroke="#2b2b2b" stroke-width="1.7" transform="rotate(4 467 85.8)"/>
<ellipse cx="474.8" cy="83.1" rx="4.1" ry="2.6" stroke="#2b2b2b" stroke-width="1.7" transform="rotate(38 474.8 83.1)"/>
<!-- 9 offset -->
<path d="M524.2 63.4 H504 Q492.3 63.8 492.3 75 Q492.3 86.2 504 86.6 H524.2" stroke="#1e8fe0" stroke-width="1.4"/>
<path d="M524.2 68.7 H504.5 Q498.4 69 498.4 75 Q498.4 81 504.5 81.3 H524.2" stroke="#555" stroke-width="1.2"/>
<!-- 10 fix/ground -->
<path d="M559.7 61.5 V78.3 M563.7 61.5 V78.3 M553.2 81 H570.2" stroke="#555" stroke-width="1.2"/>
<path d="M553.2 84.7 H570.2" stroke="#cc1530" stroke-width="1.3"/>
<path d="M558.6 65 l-4.4 -3.6 M558.6 69.6 l-4.4 -3.6 M558.6 74.2 l-4.4 -3.6 M558.6 78.6 l-4.4 -3.6 M557.6 85 l-3.6 4 M562.6 85 l-3.6 4 M567.6 85 l-3.6 4" stroke="#cc1530" stroke-width="1.2"/>
<!-- 11 horizontal/vertical -->
<path d="M592 89.2 H620.8" stroke="#555" stroke-width="1.2"/>
<path d="M590.5 59.2 V88.6" stroke="#cc1530" stroke-width="1.3"/>
<rect x="589.1" y="88" width="2.8" height="2.8" fill="#cc1530" stroke="none"/>
<!-- 12 tangent -->
<circle cx="643.9" cy="78.2" r="11.8" stroke="#cc1530" stroke-width="1.2"/>
<path d="M643.2 60.6 L662.2 79.6" stroke="#555" stroke-width="1.1"/>
<!-- 13 equal -->
<rect x="681.1" y="68.1" width="20" height="3.8" fill="#c0102a" stroke="none"/>
<rect x="681.1" y="78.2" width="20" height="3.8" fill="#666" stroke="none"/>
<!-- 14 parallel -->
<path d="M722.6 81.4 L740.6 63.7" stroke="#cc1530" stroke-width="1.2"/>
<path d="M727.8 86.2 L745.5 68.6" stroke="#555" stroke-width="1.2"/>
<!-- 15 perpendicular -->
<path d="M764.4 67.4 L784.6 87.6" stroke="#cc1530" stroke-width="1.2"/>
<path d="M774.6 77.2 L789.4 62.7" stroke="#555" stroke-width="1.2"/>
<!-- 16 lock -->
<path d="M812.6 72.6 V67.6 Q812.6 61 819.6 61 Q826.6 61 826.6 67.6 V72.6" stroke="#cc1530" stroke-width="2.6"/>
<path d="M812.6 72.6 V67.6 Q812.6 61 819.6 61 Q826.6 61 826.6 67.6 V72.6" stroke="#e6a5ae" stroke-width="1"/>
<rect x="807.6" y="72.8" width="24" height="17.8" fill="#d98590" stroke="#cc1530" stroke-width="1.1"/>
<path d="M819.6 78.8 V84.2" stroke="#8a1020" stroke-width="1"/>
<!-- 17 triangle -->
<path d="M850.4 87.4 H876.2 L863.2 66 Z" stroke="#cc1530" stroke-width="1.3"/>
<!-- 18 concentric -->
<circle cx="905.9" cy="75" r="13.6" stroke="#cc1530" stroke-width="1.2"/>
<circle cx="905.9" cy="75" r="7.6" stroke="#555" stroke-width="1.2"/>
<!-- 19 collinear -->
<path d="M935.5 88.5 L952.3 71.9" stroke="#555" stroke-width="1.2"/>
<path d="M954.2 69.8 L961.9 62" stroke="#cc1530" stroke-width="1.2"/>
<path d="M935.2 68.4 L942.4 75.4" stroke="#222" stroke-width="1.1"/>
<path d="M945.2 78 l-5.6 -1.6 l3.8 -3.8 Z" fill="#222" stroke="none"/>
<!-- 20 symmetry -->
<path d="M979.5 65.2 V84.7 M996.8 65.2 H1003.7 V84.7 H996.8" stroke="#555" stroke-width="1.2"/>
<path d="M979.5 65.2 H986.8 M979.5 84.7 H986.8" stroke="#cc1530" stroke-width="1.3"/>
<path d="M991.5 61.3 V88.8" stroke="#555" stroke-width="1.2" stroke-dasharray="9 1.6 4 1.6"/>
<!-- 21 curvature -->
<path d="M1022.7 68.4 C1027 74 1033 70 1037.4 72.6 C1040.5 75 1035 83.5 1041.7 86.6" stroke="#555" stroke-width="1.1"/>
<path d="M1028.3 63.2 L1047 81.7" stroke="#cc1530" stroke-width="1.2"/>
<rect x="1036" y="71.2" width="2.8" height="2.8" fill="#cc1530" stroke="none"/>
<!-- 22 measure -->
<rect x="1085.5" y="77.1" width="28" height="6" fill="#fbad05" stroke="none"/>
<path d="M1085.5 82.7 H1113.5" stroke="#bf8f2c" stroke-width=".9"/>
<path d="M1086.6 77.4 v1.8 M1089.6 77.4 v2.6 M1092.6 77.4 v1.8 M1095.6 77.4 v2.6 M1098.6 77.4 v1.8 M1101.6 77.4 v2.6 M1104.6 77.4 v1.8 M1107.6 77.4 v2.6 M1110.6 77.4 v1.8" stroke="#8a5a0a" stroke-width=".9"/>
<path d="M1085.6 67.2 V75.8 M1112.6 67.2 V75.8" stroke="#555" stroke-width="1.2"/>
<path d="M1089 71.5 H1109" stroke="#606060" stroke-width="1.1"/>
<path d="M1086.6 71.5 l3.6 -2.4 v4.8 Z M1111.6 71.5 l-3.6 -2.4 v4.8 Z" fill="#606060" stroke="none"/>
<!-- 23 image -->
<rect x="1163.2" y="60.4" width="28.6" height="28.4" fill="#85ccf6" stroke="#4a9bd0" stroke-width=".8"/>
<path d="M1163.6 88.4 V76 Q1167 70 1171 72.6 Q1174.6 75.6 1177.6 82.6 Q1181 77 1184 78.6 Q1188 80 1191.4 84.6 V88.4 Z" fill="#4596c8" stroke="none"/>
<circle cx="1184.1" cy="68.2" r="3" fill="#fdf7c4" stroke="none"/>
<!-- 24 select -->
<rect x="1256.4" y="59.2" width="27.6" height="21.6" stroke="#33c94a" stroke-width="1.2" stroke-dasharray="3.4 2"/>
<path d="M1277.4 74 L1277.4 87.4 L1280.4 84.6 L1282.6 89.8 L1284.8 88.8 L1282.6 83.8 L1286.8 83.6 Z" fill="#fff" stroke="#222" stroke-width="1.1"/>
<!-- 25 finish -->
<circle cx="1402.9" cy="74.9" r="15.4" fill="#5fd40a" stroke="none"/>
<path d="M1395 75 L1400.2 80.4 L1411 69.4" stroke="#fff" stroke-width="3.6"/>
</g>
<path d="M284.3 101.1 h6 l-3 4.1 Z" fill="#2a2a2a"/><path d="M481.1 101.1 h6 l-3 4.1 Z" fill="#2a2a2a"/><path d="M839.0 101.1 h6 l-3 4.1 Z" fill="#2a2a2a"/><path d="M1117.0 101.1 h6 l-3 4.1 Z" fill="#2a2a2a"/><path d="M1201.1999999999998 101.1 h6 l-3 4.1 Z" fill="#2a2a2a"/><path d="M1301.8999999999999 101.1 h6 l-3 4.1 Z" fill="#2a2a2a"/><path d="M1460.8 101.1 h6 l-3 4.1 Z" fill="#2a2a2a"/><path d="M107 70.8 h5.8 l-2.9 4 Z" fill="#222"/></svg></div>
<div id="bottom"><svg width="1920" height="50" viewBox="0 970 1920 50" style="top:-2px">
<g fill="#4a4a4a">
<rect x="10.5" y="989.2" width="2.2" height="13.4"/><path d="M23 989.2 V1002.6 L13 995.9 Z"/>
<path d="M45.2 989.6 V1002.2 L35.2 995.9 Z"/><rect x="45.8" y="992.2" width="2.2" height="7.4"/>
<path d="M60.8 988.6 V1003.8 L73 996.2 Z"/>
<rect x="85" y="992.2" width="2.2" height="7.4"/><path d="M87.8 989.6 V1002.2 L97.8 995.9 Z"/>
<path d="M110.8 989.2 V1002.6 L120.8 995.9 Z"/><rect x="120.8" y="989.2" width="2.2" height="13.4"/>
</g>
<!-- sketch icon 1 -->
<g>
<path d="M149 988.3 H158.2 M147.4 990 V999.4 M159.8 990 V994.2 M149 1000.6 H153.2" stroke="#4a4a4a" stroke-width="1.2" fill="none"/>
<rect x="146.1" y="986.9" width="2.2" height="2.2" fill="#1f6fb0"/><rect x="158.9" y="986.9" width="2.2" height="2.2" fill="#1f6fb0"/><rect x="146.1" y="999.8" width="2.2" height="2.2" fill="#1487e0"/>
<path d="M154.4 1002.8 L156 999.8 L157.2 1001.4 Z" fill="#555"/>
<path d="M156 999.8 L159.6 996 L161 997.4 L157.2 1001.4 Z" fill="#f5c243"/>
<path d="M159.6 996 L160.6 994.8 Q161.6 994.6 162.2 996 L161 997.4 Z" fill="#d42a3a"/>
</g>
<g transform="translate(24 0)">
<path d="M149 988.3 H158.2 M147.4 990 V999.4 M159.8 990 V994.2 M149 1000.6 H153.2" stroke="#4a4a4a" stroke-width="1.2" fill="none"/>
<rect x="146.1" y="986.9" width="2.2" height="2.2" fill="#1f6fb0"/><rect x="158.9" y="986.9" width="2.2" height="2.2" fill="#1f6fb0"/><rect x="146.1" y="999.8" width="2.2" height="2.2" fill="#1487e0"/>
<path d="M154.4 1002.8 L156 999.8 L157.2 1001.4 Z" fill="#555"/>
<path d="M156 999.8 L159.6 996 L161 997.4 L157.2 1001.4 Z" fill="#f5c243"/>
<path d="M159.6 996 L160.6 994.8 Q161.6 994.6 162.2 996 L161 997.4 Z" fill="#d42a3a"/>
</g>
<!-- bracket -->
<path d="M155.2 1006.2 V1011.9 H178 V1006.2" stroke="#c8c8c8" stroke-width="1.8" fill="none"/>
<!-- marker -->
<path d="M184.2 981.3 H196 V984.9 L191.3 989.8 V1012.8 H188.9 V989.8 L184.2 984.9 Z" fill="#606060"/>
<!-- gear -->
<g transform="translate(1899 996)">
<circle r="4.1" fill="none" stroke="#8f8f8f" stroke-width="3"/>
<g stroke="#8f8f8f" stroke-width="2.9">
<path d="M0 -7.9 V-5 M0 7.9 V5 M-7.9 0 H-5 M7.9 0 H5 M-5.6 -5.6 L-3.6 -3.6 M5.6 5.6 L3.6 3.6 M-5.6 5.6 L-3.6 3.6 M5.6 -5.6 L3.6 -3.6"/>
</g>
</g>
</svg>
</div>
</body></html>
